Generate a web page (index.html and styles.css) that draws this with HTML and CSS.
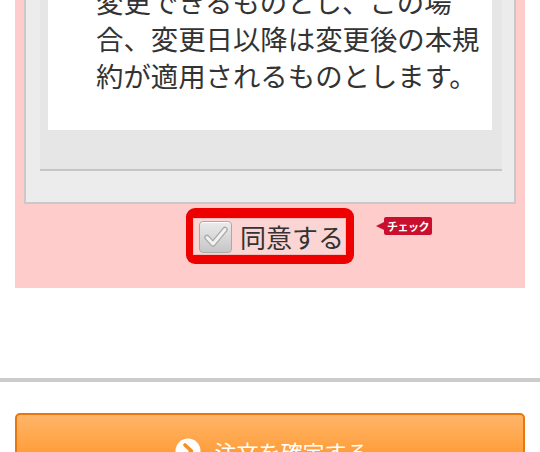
FILE: index.html
```html
<!DOCTYPE html>
<html lang="ja">
<head>
<meta charset="utf-8">
<link rel="stylesheet" href="styles.css">
</head>
<body>
<div class="page">
  <section class="agree-section">
    <div class="terms-box">
      <div class="terms-scroll">
        <div class="terms-paper">
          <p class="terms-text">変更できるものとし、この場<br>合、変更日以降は変更後の本規<br>約が適用されるものとします。</p>
        </div>
      </div>
    </div>
    <div class="agree-row">
      <label class="agree-frame">
        <span class="agree-inner">
          <span class="checkbox">
            <svg viewBox="0 0 33 32" width="33" height="32" aria-hidden="true">
              <path d="M8 16.5 L14 23 L26 8.5" fill="none" stroke="#a8a8a8" stroke-width="5.5" stroke-linecap="round" stroke-linejoin="round"/>
              <path d="M8 16.5 L14 23 L26 8.5" fill="none" stroke="#f2f2f2" stroke-width="3" stroke-linecap="round" stroke-linejoin="round"/>
            </svg>
          </span>
          <span class="agree-label">同意する</span>
        </span>
        <span class="check-tag">チェック</span>
      </label>
    </div>
  </section>
  <div class="gap"></div>
  <hr class="divider">
  <div class="confirm-wrap">
    <button class="confirm-btn" type="button">
      <svg class="confirm-icon" viewBox="0 0 26 26" width="26" height="26" aria-hidden="true">
        <circle cx="13" cy="13" r="12.5" fill="#ffffff"/>
        <path d="M10 7 L16.5 13 L10 19" fill="none" stroke="#f7901e" stroke-width="3.6" stroke-linecap="round" stroke-linejoin="round"/>
      </svg>
      <span>注文を確定する</span>
    </button>
  </div>
</div>
</body>
</html>
```
FILE: styles.css
```css
html, body {
  margin: 0;
  padding: 0;
  background: #ffffff;
  font-family: "Noto Sans CJK JP", "Noto Sans", sans-serif;
  color: #333333;
  overflow: hidden;
}

.page {
  width: 540px;
  margin-top: -17px;
}

.agree-section {
  margin: 0 15px;
  background: #ffcccc;
  padding: 0 9px 24px;
}

.terms-box {
  background: #ececec;
  border: 2px solid #c9c9c9;
  border-top: none;
  padding: 0 12px 31px 14px;
}

.terms-scroll {
  background: #e6e6e6;
  border-bottom: 2px solid #c6c6c6;
  padding: 0 10px 39px 8px;
}

.terms-paper {
  background: #ffffff;
  padding: 0 10px 36px 48px;
}

.terms-text {
  margin: 0;
  font-size: 27.4px;
  line-height: 37px;
  color: #333333;
  white-space: nowrap;
}

.agree-row {
  display: flex;
  justify-content: center;
  padding-top: 4px;
}

.agree-frame {
  position: relative;
  display: block;
  background: #ee0000;
  border-radius: 9px;
  padding: 10px 8px 9px 7px;
}

.agree-inner {
  display: flex;
  align-items: center;
  gap: 8px;
  width: 153px;
  height: 37px;
  box-sizing: border-box;
  padding-left: 6px;
  background: #fbd5d3;
  box-shadow: inset 0 0 0 1px #f0bdbb;
}

.checkbox {
  display: block;
  width: 33px;
  height: 32px;
  box-sizing: border-box;
  border: 1px solid #a9a9a9;
  border-radius: 4px;
  background: linear-gradient(#ebebeb, #c6c6c6);
  box-shadow: inset 0 1px 0 #ffffff;
}

.checkbox svg {
  display: block;
  margin: -1px;
}

.agree-label {
  font-size: 26px;
  line-height: 30px;
  color: #333333;
}

.check-tag {
  position: absolute;
  left: 198px;
  top: 9px;
  width: 48px;
  height: 18px;
  background: #c8102e;
  border-radius: 2px;
  color: #ffffff;
  font-size: 11px;
  font-weight: bold;
  line-height: 18px;
  text-align: center;
  letter-spacing: -0.5px;
}

.check-tag::before {
  content: "";
  position: absolute;
  left: -8px;
  top: 5px;
  border-style: solid;
  border-width: 4px 8px 4px 0;
  border-color: transparent #c8102e transparent transparent;
}

.gap {
  height: 90px;
}

.divider {
  margin: 0;
  border: none;
  height: 4px;
  background: #cccccc;
}

.confirm-wrap {
  padding: 31px 15px 0;
}

.confirm-btn {
  display: flex;
  align-items: center;
  justify-content: center;
  gap: 13px;
  width: 510px;
  height: 76px;
  box-sizing: border-box;
  border: 2px solid #ea760f;
  border-radius: 5px;
  background: linear-gradient(#ffb56a, #ff9b33 60%, #ff9428);
  color: #ffffff;
  font-family: "Noto Sans CJK JP", "Noto Sans", sans-serif;
  font-size: 22px;
  padding: 0;
  padding-left: 4px;
}

.confirm-icon {
  display: block;
}
```
